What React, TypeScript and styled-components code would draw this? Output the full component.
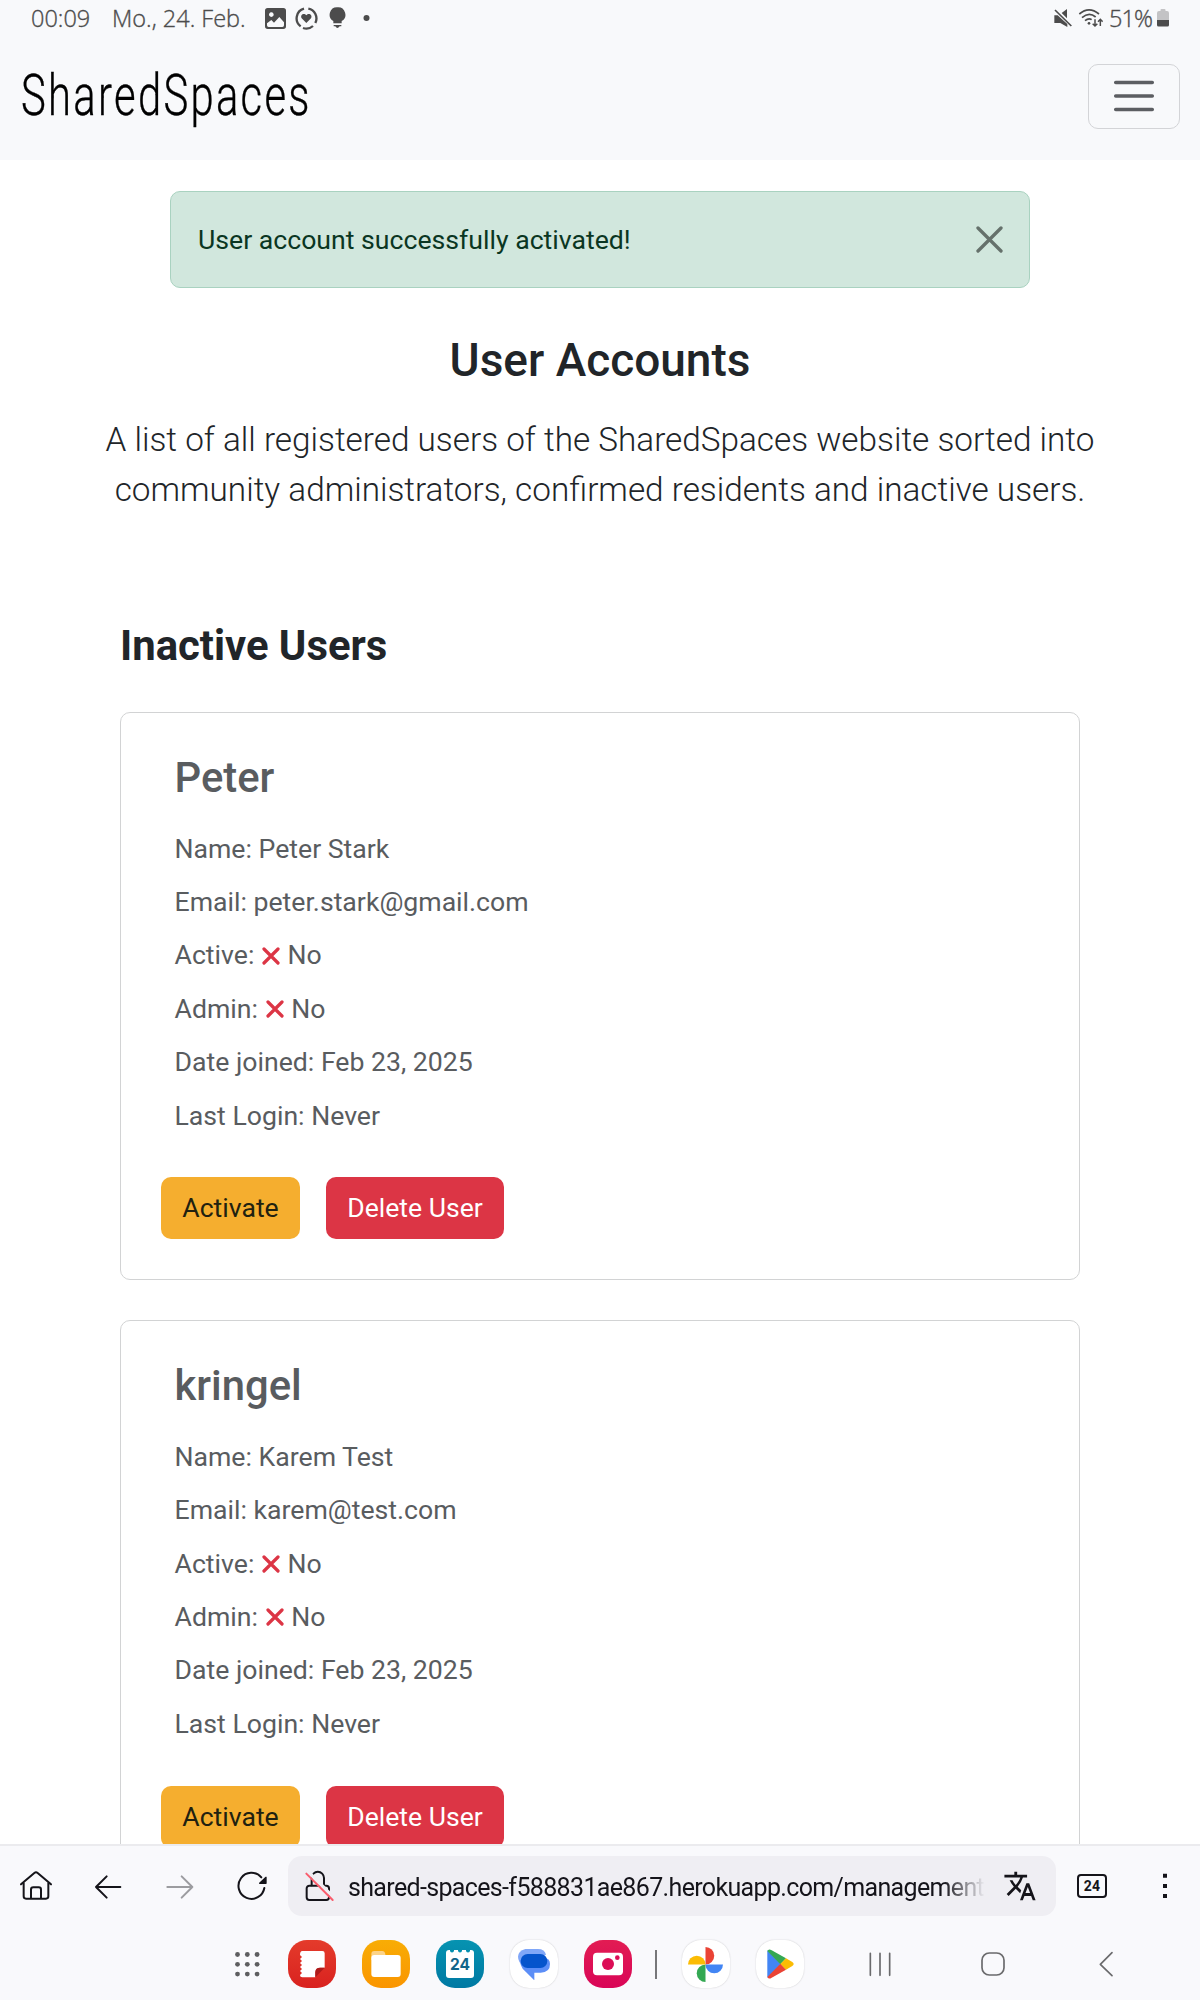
import React from 'react';
import styled, { createGlobalStyle } from 'styled-components';
import { MdTranslate } from 'react-icons/md';

const GlobalStyle = createGlobalStyle`
  *, *::before, *::after { box-sizing: border-box; }
  body { margin: 0; background: #fff; font-family: Roboto, "Liberation Sans", sans-serif; color: #212529; }
  h1, h2, h3, p { margin: 0; }
  button { font-family: inherit; margin: 0; padding: 0; background: none; border: 0; }
  svg { display: block; flex: none; }
`;

const Screen = styled.div`
  width: 1200px;
  height: 2000px;
  display: flex;
  flex-direction: column;
  overflow: hidden;
`;

const StatusBar = styled.div`
  height: 36px;
  flex: none;
  display: flex;
  align-items: center;
  padding: 0 31px 0 31px;
  background: #f8f9fb;
  color: #4c4c4c;
  font: 300 23.5px/35px "Open Sans", sans-serif;
  -webkit-text-stroke: 0.35px #4c4c4c;
`;
const Clock = styled.span`
  width: 81px;
  white-space: nowrap;
`;
const StatusDate = styled.span`
  width: 153px;
  white-space: nowrap;
`;
const StatusIcons = styled.div`
  display: flex;
  align-items: center;
  gap: 9px;
`;
const StatusRight = styled.div`
  margin-left: auto;
  display: flex;
  align-items: center;
`;
const Percent = styled.span`
  width: 54px;
  padding-left: 6px;
  letter-spacing: -0.9px;
`;

const Navbar = styled.header`
  height: 124px;
  flex: none;
  display: flex;
  justify-content: space-between;
  align-items: flex-start;
  padding: 27.5px 20px 0 21px;
  background: #f8f9fb;
`;
const Brand = styled.div`
  width: 290px;
  height: 64px;
  font-size: 58px;
  font-weight: 300;
  line-height: 62px;
  letter-spacing: 3.2px;
  -webkit-text-stroke: 0.4px #000;
  color: #000;
  white-space: nowrap;
  transform: scaleX(0.72);
  transform-origin: 0 50%;
`;
const Toggler = styled.button`
  width: 92px;
  height: 65px;
  display: flex;
  align-items: center;
  justify-content: center;
  border: 1px solid #d3d4d7;
  border-radius: 10px;
`;

const Page = styled.main`
  flex: 1;
  min-height: 0;
  overflow: hidden;
  display: flex;
  flex-direction: column;
  align-items: center;
`;
const Alert = styled.div`
  width: 860px;
  height: 97px;
  flex: none;
  margin-top: 31px;
  padding: 0 26.5px 0 27px;
  display: flex;
  align-items: center;
  justify-content: space-between;
  background: #d1e7dd;
  border: 1px solid #a9d2c0;
  border-radius: 10px;
  color: #0a3622;
  font-size: 26.65px;
  line-height: 38px;
`;
const AlertText = styled.span`
  padding-bottom: 0;
`;
const PageTitle = styled.h1`
  margin-top: 45px;
  flex: none;
  font-size: 46px;
  font-weight: 500;
  line-height: 55px;
`;
const Lead = styled.p`
  margin-top: 27px;
  flex: none;
  font-size: 33.3px;
  font-weight: 300;
  line-height: 50px;
  text-align: center;
  white-space: pre-line;
`;
const Section = styled.section`
  width: 960px;
  flex: none;
  margin-top: 106px;
  display: flex;
  flex-direction: column;
`;
const SectionTitle = styled.h2`
  font-size: 41.8px;
  font-weight: 700;
  line-height: 50px;
`;
const CardList = styled.div`
  margin-top: 41px;
  display: flex;
  flex-direction: column;
  gap: 40.3px;
`;
const Card = styled.article`
  height: 568px;
  padding: 39.5px 40px 0;
  border: 1px solid #d2d3d4;
  border-radius: 10px;
  color: #595c5f;
`;
const CardTitle = styled.h3`
  padding-left: 13.5px;
  margin-bottom: 20px;
  font-size: 41.8px;
  font-weight: 500;
  line-height: 50px;
`;
const Row = styled.p`
  padding-left: 13.5px;
  display: flex;
  align-items: center;
  font-size: 26.65px;
  line-height: 53.4px;
  white-space: pre;
`;
const Actions = styled.div`
  margin-top: 34.3px;
  display: flex;
  gap: 26px;
`;
const Button = styled.button<{ $danger?: boolean }>`
  width: ${(p) => (p.$danger ? 178 : 139)}px;
  height: 62px;
  padding-bottom: 1px;
  border-radius: 10px;
  background: ${(p) => (p.$danger ? '#dc3545' : '#f5ae2f')};
  color: ${(p) => (p.$danger ? '#fff' : '#212110')};
  font-size: 26.6px;
`;

const Chrome = styled.footer`
  height: 156px;
  flex: none;
  border-top: 2px solid #ebebee;
  background: #f9f9fc;
`;
const Toolbar = styled.div`
  height: 80px;
  display: grid;
  grid-template-columns: repeat(4, 72px) 768px repeat(2, 72px);
  align-items: center;
  justify-items: center;
`;
const Address = styled.div`
  width: 768px;
  height: 60px;
  padding: 0 19px 0 7px;
  display: flex;
  align-items: center;
  border-radius: 14px;
  background: #efeef3;
  color: #15141a;
`;
const Url = styled.div`
  width: 637px;
  margin: 4px 18px 0 5px;
  font-size: 25px;
  line-height: 40px;
  letter-spacing: -0.65px;
  white-space: nowrap;
  mask-image: linear-gradient(90deg, #000 93.5%, transparent 100%);
`;
const Tabs = styled.div`
  width: 30px;
  height: 24px;
  border: 2px solid #15141a;
  border-radius: 4px;
  font-size: 14px;
  font-weight: 700;
  line-height: 20px;
  letter-spacing: 0.3px;
  text-align: center;
  color: #15141a;
`;
const Taskbar = styled.div`
  height: 72px;
  margin-top: 2px;
  padding-left: 234.5px;
  display: flex;
  align-items: center;
`;
const Apps = styled.div`
  margin-left: 28.5px;
  display: flex;
  gap: 26px;
`;
const Divider = styled.div`
  width: 1.6px;
  height: 29px;
  margin: 0 -3.5px 0 23px;
  background: #77777a;
`;
const SystemKeys = styled.div`
  margin-left: 52px;
  display: flex;
  gap: 65px;
`;

const AppTile = styled.div<{ $bg: string; $light?: boolean }>`
  width: 48px;
  height: 48px;
  border-radius: 19px;
  display: flex;
  align-items: center;
  justify-content: center;
  background: ${(p) => p.$bg};
  box-shadow: ${(p) => (p.$light ? '0 0 1.5px rgba(0,0,0,.22)' : 'none')};
`;
const CalendarFace = styled.div`
  position: relative;
  width: 28px;
  height: 28px;
  border-radius: 3px;
  background: #fff;
  color: #10658a;
  font: 700 15.5px/30px Inter, sans-serif;
  text-align: center;
`;
const CalendarRings = styled.svg`
  position: absolute;
  left: 0;
  top: 0;
`;

/** Toolbar glyph on a 48px canvas whose origin is the centre. */
const Glyph = ({ color = '#15141a', children }: { color?: string; children: React.ReactNode }) => (
  <svg width="48" height="48" viewBox="-72 -72 144 144" fill="none" stroke={color} strokeWidth="6" strokeLinecap="round" strokeLinejoin="round">
    {children}
  </svg>
);

const CrossIcon = styled.svg`
  margin: 0 1px 1px 1px;
`;
const Cross = () => (
  <CrossIcon width="18" height="18" viewBox="0 0 18 18" stroke="#dc3545" strokeWidth="3.2" strokeLinecap="round">
    <path d="M2 2 16 16M16 2 2 16" />
  </CrossIcon>
);

type User = { username: string; name: string; email: string };
const users: User[] = [
  { username: 'Peter', name: 'Peter Stark', email: 'peter.stark@gmail.com' },
  { username: 'kringel', name: 'Karem Test', email: 'karem@test.com' },
];

const UserCard = ({ user }: { user: User }) => (
  <Card>
    <CardTitle>{user.username}</CardTitle>
    <Row>Name: {user.name}</Row>
    <Row>Email: {user.email}</Row>
    <Row>{'Active: '}<Cross />{' No'}</Row>
    <Row>{'Admin: '}<Cross />{' No'}</Row>
    <Row>Date joined: Feb 23, 2025</Row>
    <Row>Last Login: Never</Row>
    <Actions>
      <Button>Activate</Button>
      <Button $danger>Delete User</Button>
    </Actions>
  </Card>
);

export default function App() {
  return (
    <Screen>
      <GlobalStyle />
      <StatusBar>
        <Clock>00:09</Clock>
        <StatusDate>Mo., 24. Feb.</StatusDate>
        <StatusIcons>
          <svg width="21" height="21" viewBox="0 0 63 63">
            <path fill="#4c4c4c" fillRule="evenodd" d="M8 0H55Q63 0 63 8V55Q63 63 55 63H8Q0 63 0 55V8Q0 0 8 0ZM19 13a7 7 0 1 0 .1 0ZM6 46V52Q6 57 11 57H52Q57 57 57 52V43L43 27 27 44 19 36Z" />
          </svg>
          <svg width="23" height="23" viewBox="0 0 69 69" fill="none" stroke="#4c4c4c" strokeWidth="7">
            <path d="M27 5A30 30 0 0 0 17 58M24 63A30 30 0 0 0 54 57M61 48A30 30 0 0 0 40 5" />
            <path fill="#4c4c4c" stroke="none" d="M34 48 20 34C14 24 27 15 34 25 41 15 54 24 48 34Z" />
          </svg>
          <svg width="23" height="22" viewBox="0 0 69 66" fill="#4c4c4c">
            <path d="M31 1a22 22 0 0 0-12 41V49H44V42A22 22 0 0 0 31 1ZM20 54H43V58H38Q31 68 25 58H20Z" />
          </svg>
          <svg width="17" height="8" viewBox="0 0 17 8" fill="#4c4c4c">
            <circle cx="7.5" cy="4" r="3" />
          </svg>
        </StatusIcons>
        <StatusRight>
          <svg width="20" height="20" viewBox="0 0 60 60" fill="#4c4c4c">
            <path d="M4 22H14L27 34 43 48V57L22 45H4ZM26 15 42 3V31Z" />
            <path d="M6 6 55 54" stroke="#4c4c4c" strokeWidth="5" />
          </svg>
          <svg width="30" height="20" viewBox="0 0 90 60" fill="none" stroke="#4c4c4c" strokeWidth="5">
            <path d="M19 18Q48-7 78 18M27 29Q48 10 68 27M36 38Q47 29 56 35" />
            <path d="M66 34V54M59 47 66 54 73 47M82 54V34M75 41 82 34 89 41" strokeWidth="4.5" />
            <circle cx="48" cy="46" r="4" fill="#4c4c4c" stroke="none" />
          </svg>
          <Percent>51%</Percent>
          <svg width="12" height="18" viewBox="0 0 12 18">
            <path fill="#c3c3c5" d="M3.5 2V1Q3.5 0 4.5 0H7.5Q8.5 0 8.5 1V2H10Q12 2 12 4V11H0V4Q0 2 2 2Z" />
            <path fill="#4c4c4c" d="M0 11H12V16Q12 17.5 10.5 17.5H1.5Q0 17.5 0 16Z" />
          </svg>
        </StatusRight>
      </StatusBar>

      <Navbar>
        <Brand>SharedSpaces</Brand>
        <Toggler aria-label="Menu">
          <svg width="42" height="32" viewBox="0 0 42 32" stroke="#5c5e62" strokeWidth="3.5" strokeLinecap="round">
            <path d="M2.7 2.5H39.3M2.7 16H39.3M2.7 29.5H39.3" />
          </svg>
        </Toggler>
      </Navbar>

      <Page>
        <Alert>
          <AlertText>User account successfully activated!</AlertText>
          <svg width="27" height="27" viewBox="0 0 27 27" stroke="#65716b" strokeWidth="3.3" strokeLinecap="round">
            <path d="M2 2 25 25M25 2 2 25" />
          </svg>
        </Alert>
        <PageTitle>User Accounts</PageTitle>
        <Lead>
          {'A list of all registered users of the SharedSpaces website sorted into\ncommunity administrators, confirmed residents and inactive users.'}
        </Lead>
        <Section>
          <SectionTitle>Inactive Users</SectionTitle>
          <CardList>
            {users.map((u) => (
              <UserCard key={u.username} user={u} />
            ))}
          </CardList>
        </Section>
      </Page>

      <Chrome>
        <Toolbar>
          <Glyph>
            <path d="M-45-5-5-39Q0-43 5-39L45-5M-37-10V31Q-37 38-30 38H30Q37 38 37 31V-10M-15 38V11Q-15 4-8 4H8Q15 4 15 11V38" />
          </Glyph>
          <Glyph>
            <path d="M37 3H-36M-4-29-36 3-4 35" />
          </Glyph>
          <Glyph color="#9c9ca0">
            <path d="M-38 3H37M5-29 37 3 5 35" />
          </Glyph>
          <Glyph>
            <path d="M37 6A39 39 0 1 1 28-26" />
            <path d="M42-26V-8H23Z" fill="#15141a" strokeWidth="4" />
          </Glyph>
          <Address>
            <Glyph>
              <path d="M-22-2V-24A18.5 18.5 0 0 1 15-24V-2" />
              <rect x="-37" y="-1" width="67" height="43" rx="8" />
              <path d="M-40-50 46 37" stroke="#efeef3" strokeWidth="11" strokeLinecap="butt" />
              <path d="M-38-37 41 42" stroke="#f95d6d" />
            </Glyph>
            <Url>shared-spaces-f588831ae867.herokuapp.com/management</Url>
            <MdTranslate size={34} />
          </Address>
          <Tabs>24</Tabs>
          <Glyph>
            <path d="M-3-37H9V-25H-3ZM-3-6H9V6H-3ZM-3 24H9V36H-3Z" fill="#15141a" stroke="none" />
          </Glyph>
        </Toolbar>

        <Taskbar>
          <svg width="25" height="25" viewBox="0 0 25 25" fill="#5e5e60">
            {[2.5, 12.3, 22.1].map((y) => [2.5, 12.3, 22.1].map((x) => <circle key={`${x}-${y}`} cx={x} cy={y} r="2.4" />))}
          </svg>
          <Apps>
            <AppTile $bg="linear-gradient(#e43b2b, #d9221f)">
              <svg width="28" height="28" viewBox="0 0 84 84">
                <path fill="#fff" d="M13 3H73Q80 3 80 10V53H66Q52 54 52 68V82H13Q6 82 6 75l6-6-6-6 6-6-6-6 6-6-6-6 6-6-6-6 6-6-6-6Q6 3 13 3Z" />
                <path fill="#ad1b1b" d="M52 82V66Q52 53 66 53H80Z" />
              </svg>
            </AppTile>
            <AppTile $bg="linear-gradient(#f8ad05, #fa9500)">
              <svg width="32" height="28" viewBox="0 0 96 84">
                <path fill="#fcd388" d="M4 12Q4 3 13 3H37Q44 3 46 12V30H4Z" />
                <rect x="4" y="15" width="88" height="66" rx="9" fill="#fff" />
              </svg>
            </AppTile>
            <AppTile $bg="linear-gradient(#0693b1, #0079a3)">
              <CalendarFace>
                24
                <CalendarRings width="28" height="5" viewBox="0 0 28 5" fill="#0590af">
                  <circle cx="6" cy="0.5" r="2" />
                  <circle cx="14" cy="0.5" r="2" />
                  <circle cx="22" cy="0.5" r="2" />
                </CalendarRings>
              </CalendarFace>
            </AppTile>
            <AppTile $bg="#fff" $light>
              <svg width="32" height="32" viewBox="0 0 96 96">
                <path fill="#80a7f8" d="M22 3H60Q80 3 84 20L16 54Q0 42 0 26T22 3Z" />
                <path fill="#5c8ef7" d="M22 30H78Q96 30 96 48 96 74 68 74H49V97L14 62Q4 48 8 36Z" />
                <rect x="8" y="18" width="80" height="42" rx="21" fill="#0554cc" />
              </svg>
            </AppTile>
            <AppTile $bg="linear-gradient(#e21c53, #d90657)">
              <svg width="30" height="24" viewBox="0 0 90 72">
                <rect y="2" width="90" height="68" rx="12" fill="#fff" />
                <circle cx="45" cy="36" r="18" fill="#dc0d56" />
                <circle cx="73" cy="17" r="7" fill="#dc0d56" />
              </svg>
            </AppTile>
          </Apps>
          <Divider />
          <Apps>
            <AppTile $bg="#fff" $light>
              <svg width="35" height="35" viewBox="-52 -52 104 104">
                <path fill="#ea4335" d="M0 0V-52A26 26 0 0 1 0 0Z" />
                <path fill="#4285f4" d="M0 0H52A26 26 0 0 1 0 0Z" />
                <path fill="#34a853" d="M0 0V52A26 26 0 0 1 0 0Z" />
                <path fill="#fbbc04" d="M0 0H-52A26 26 0 0 1 0 0Z" />
              </svg>
            </AppTile>
            <AppTile $bg="#fff" $light>
              <svg width="28" height="30" viewBox="0 0 84 90">
                <path fill="#4285f4" d="M4 4V86L44 45Z" />
                <path fill="#34a853" d="M4 6Q8-2 17 4L60 28 43 46Z" />
                <path fill="#fbbc04" d="M60 28 79 39Q87 45 79 51L60 62 43 45Z" />
                <path fill="#ea4335" d="M4 84Q8 92 17 86L60 62 43 44Z" />
              </svg>
            </AppTile>
          </Apps>
          <SystemKeys>
            <Glyph color="#6a6a6c">
              <path d="M-29-32V34M0-32V34M29-32V34" strokeWidth="5" />
            </Glyph>
            <Glyph color="#6a6a6c">
              <rect x="-33" y="-33" width="66" height="66" rx="22" strokeWidth="5" />
            </Glyph>
            <Glyph color="#6a6a6c">
              <path d="M18-34-17 1 18 35" strokeWidth="5" />
            </Glyph>
          </SystemKeys>
        </Taskbar>
      </Chrome>
    </Screen>
  );
}
